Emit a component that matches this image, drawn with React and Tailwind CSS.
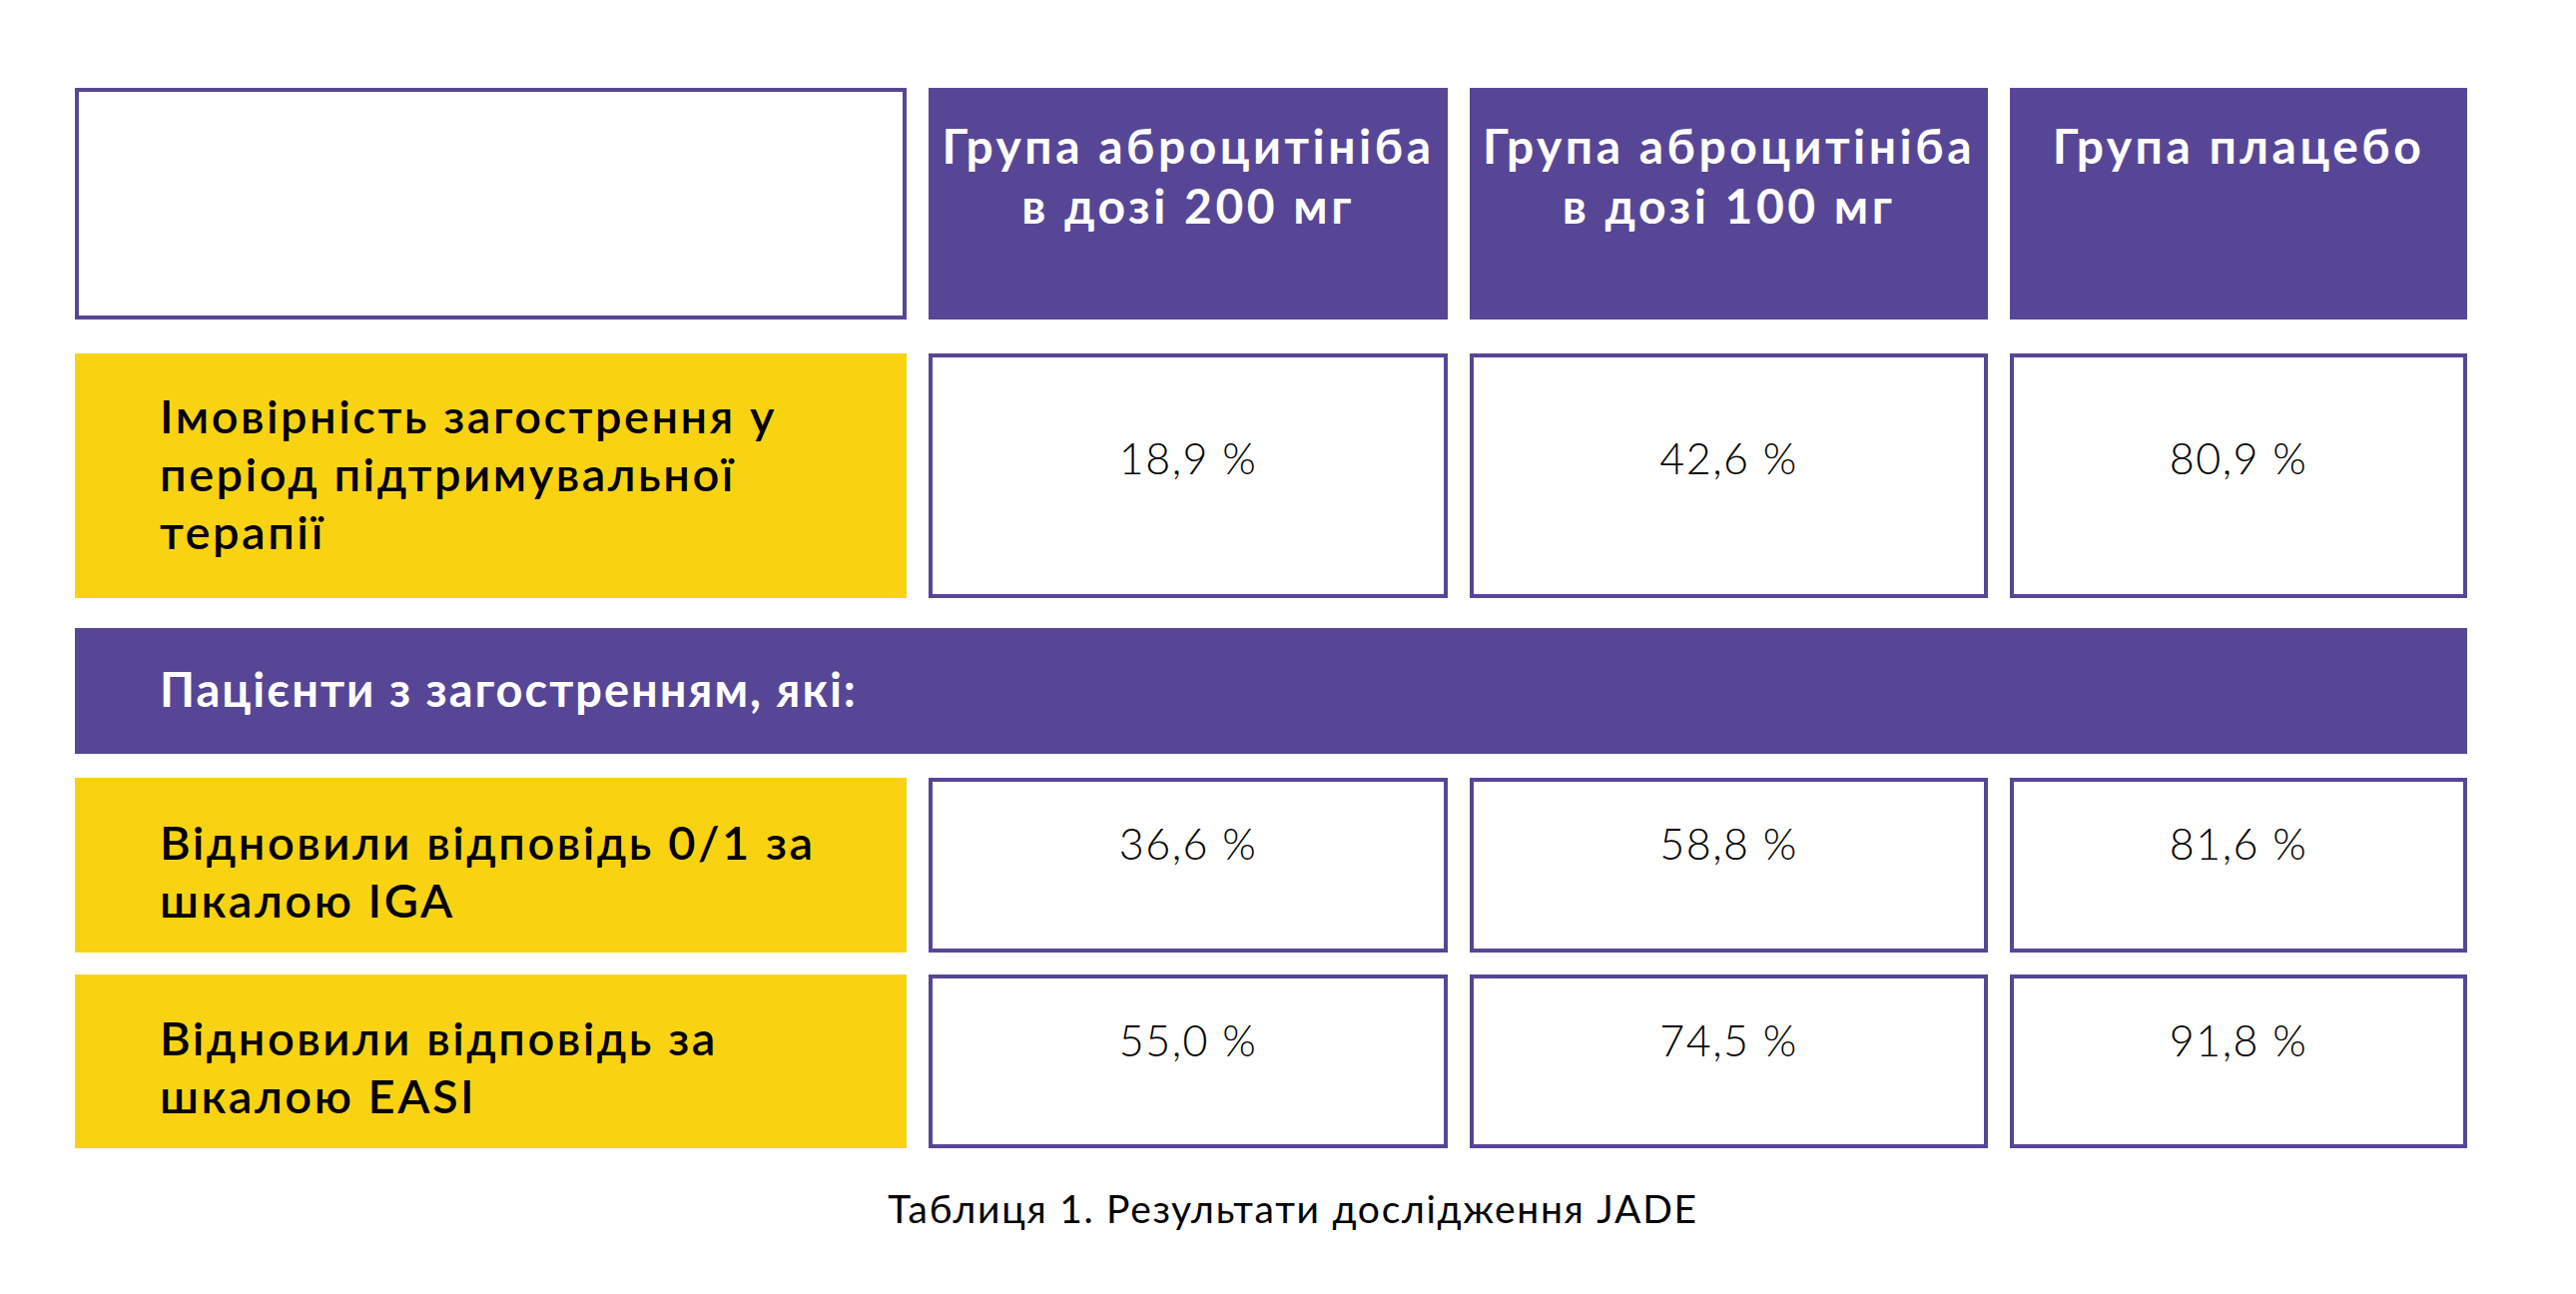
import React from 'react';

const COLS = 'grid grid-cols-[833px_520px_519px_458px] gap-x-[22px]';
const FONT = { fontFamily: 'Lato, "Open Sans", "Noto Sans", sans-serif' };

const ROWS = [
  {
    label: ['Імовірність загострення у', 'період підтримувальної', 'терапії'],
    values: ['18,9 %', '42,6 %', '80,9 %'],
    height: 'h-[245px]',
    labelPad: 'pb-[6px]',
    valuePad: 'pb-[34px]',
    mt: 'mt-[34px]',
  },
];

const SUB_ROWS = [
  {
    label: ['Відновили відповідь 0/1 за', 'шкалою IGA'],
    values: ['36,6 %', '58,8 %', '81,6 %'],
    height: 'h-[175px]',
    mt: 'mt-[24px]',
  },
  {
    label: ['Відновили відповідь за', 'шкалою EASI'],
    values: ['55,0 %', '74,5 %', '91,8 %'],
    height: 'h-[174px]',
    mt: 'mt-[22px]',
  },
];

function ValueCell({ value, pad }) {
  return (
    <div className={`border-4 border-[#574696] bg-white flex items-center justify-center ${pad}`}>
      <span className="text-[43px] font-light text-black tracking-[1.5px]">{value}</span>
    </div>
  );
}

function LabelCell({ lines, pad }) {
  return (
    <div className={`bg-[#f9d312] flex items-center pl-[85px] ${pad}`}>
      <p className="text-[47px] leading-[58px] font-semibold text-black tracking-[2.5px]">
        {lines.map((l, i) => (
          <span key={i} className="block whitespace-nowrap">{l}</span>
        ))}
      </p>
    </div>
  );
}

export default function App() {
  return (
    <div className="w-[2580px] h-[1296px] bg-white pt-[88px] pl-[75px] overflow-hidden" style={FONT}>
      {/* Header */}
      <div className={`${COLS} h-[232px]`}>
        <div className="border-4 border-[#574696] bg-white" />
        {[
          ['Група аброцитініба', 'в дозі 200 мг'],
          ['Група аброцитініба', 'в дозі 100 мг'],
          ['Група плацебо'],
        ].map((h, i) => (
          <div key={i} className="bg-[#574696] pt-[28px] text-center">
            <p className="text-[48px] leading-[60px] font-bold text-white tracking-[3.5px]">
              {h.map((l) => (
                <span key={l} className="block whitespace-nowrap">{l}</span>
              ))}
            </p>
          </div>
        ))}
      </div>

      {/* Probability row */}
      {ROWS.map((r) => (
        <div key={r.label[0]} className={`${COLS} ${r.height} ${r.mt}`}>
          <LabelCell lines={r.label} pad={r.labelPad} />
          {r.values.map((v) => (
            <ValueCell key={v} value={v} pad={r.valuePad} />
          ))}
        </div>
      ))}

      {/* Band */}
      <div className="mt-[30px] w-[2396px] h-[126px] bg-[#574696] flex items-center pl-[85px] pb-[4px]">
        <p className="text-[47px] leading-[58px] font-bold text-white tracking-[2px]">Пацієнти з загостренням, які:</p>
      </div>

      {/* Sub rows */}
      {SUB_ROWS.map((r) => (
        <div key={r.label[0]} className={`${COLS} ${r.height} ${r.mt}`}>
          <LabelCell lines={r.label} pad="pt-[10px]" />
          {r.values.map((v) => (
            <ValueCell key={v} value={v} pad="pb-[42px]" />
          ))}
        </div>
      ))}

      {/* Caption */}
      <div className="w-[2440px] mt-[36px] text-center">
        <p className="text-[39px] leading-[48px] text-black tracking-[1.7px]">Таблиця 1. Результати дослідження JADE</p>
      </div>
    </div>
  );
}
